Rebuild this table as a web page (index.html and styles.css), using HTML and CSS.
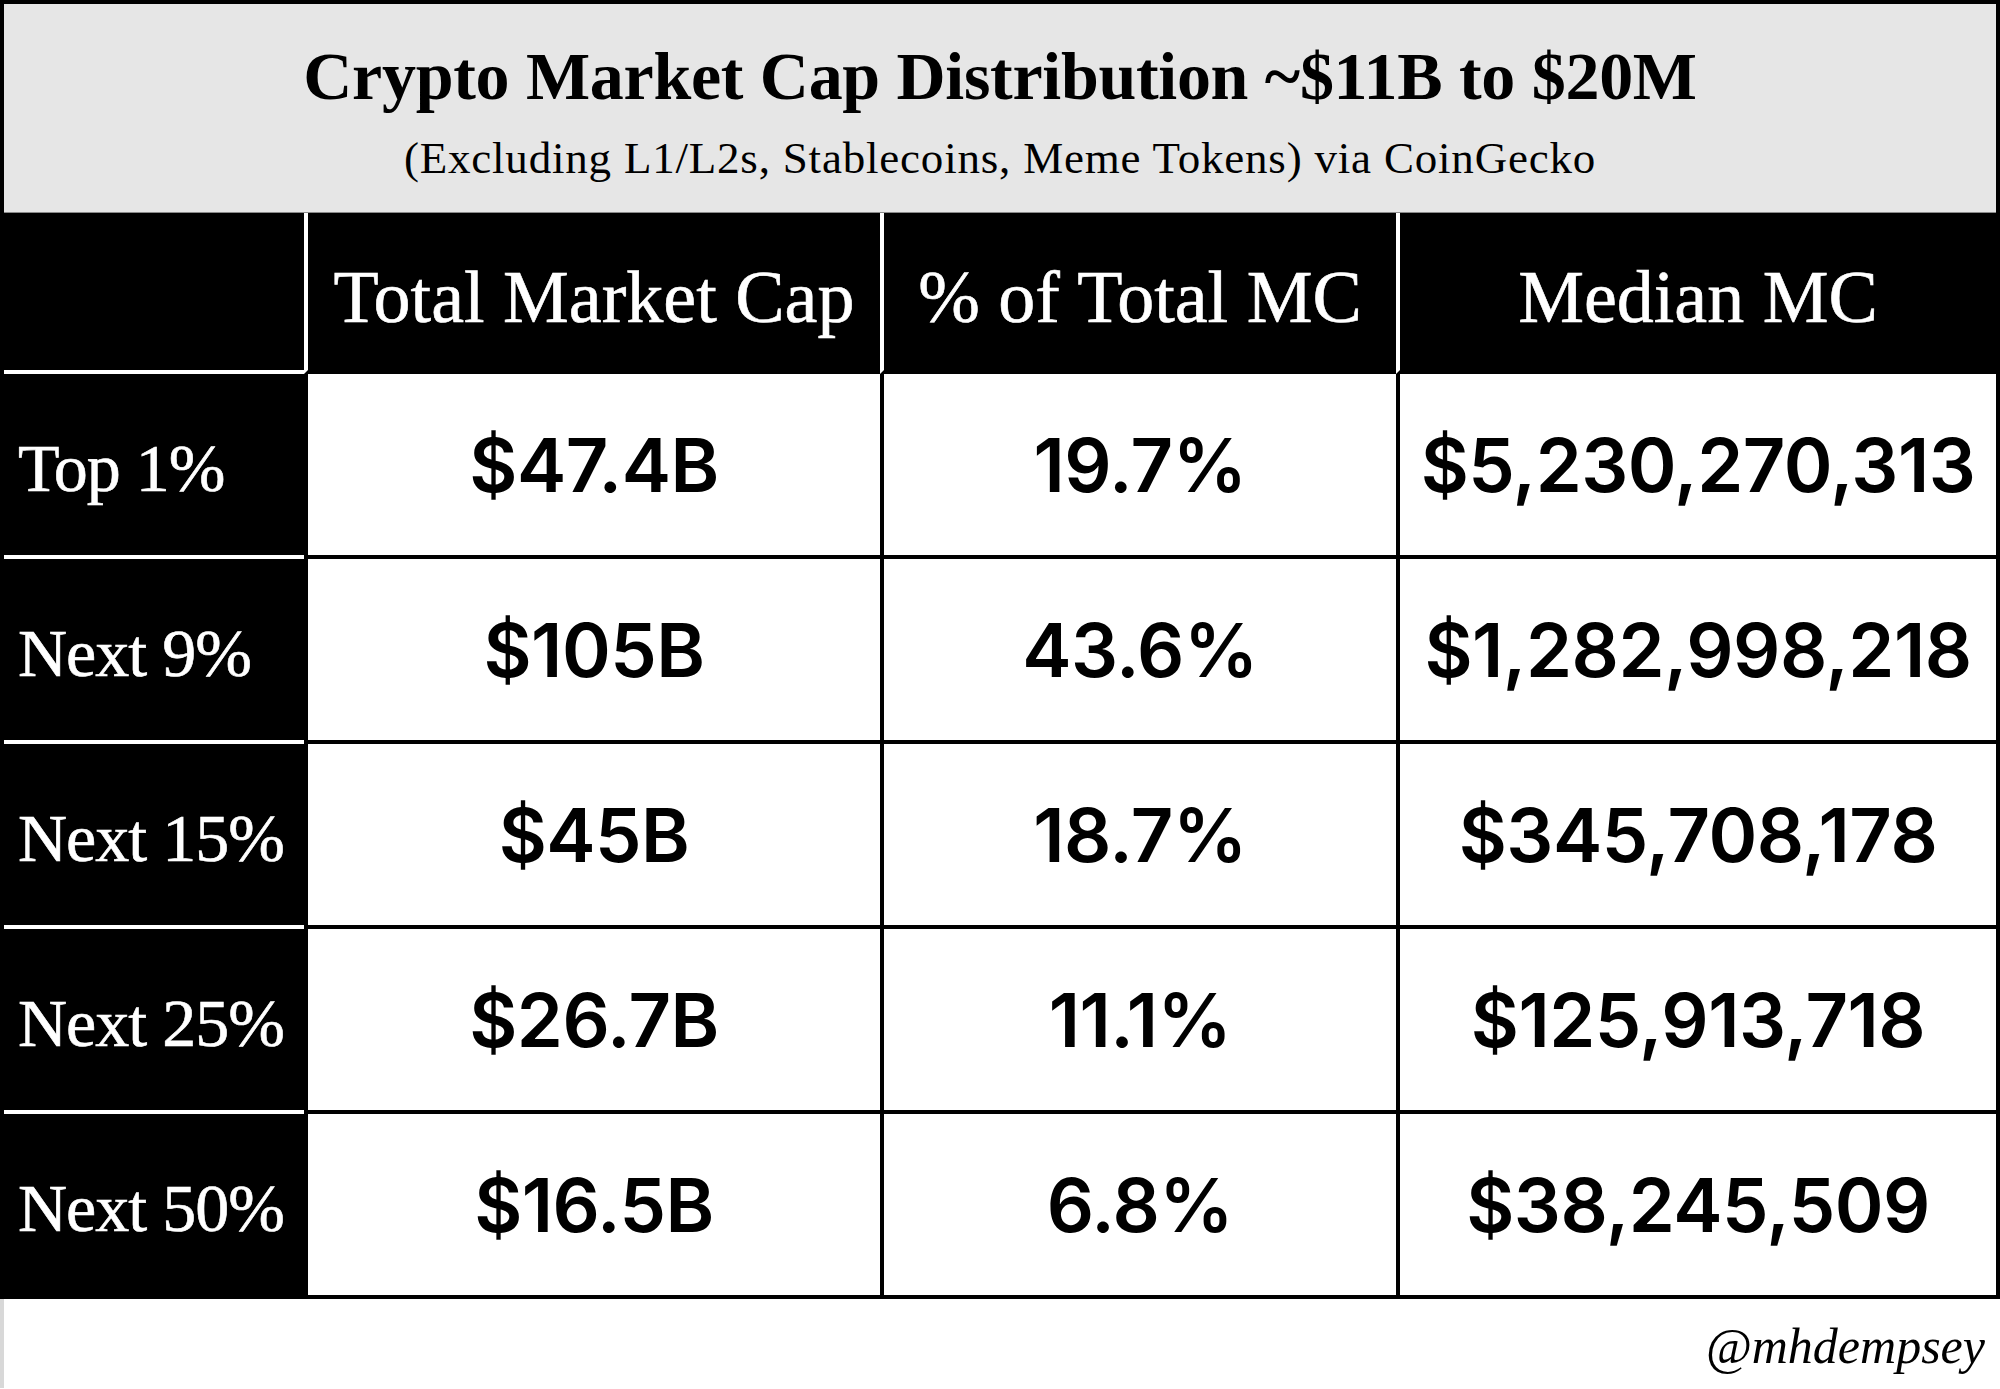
FILE: index.html
```html
<!DOCTYPE html>
<html lang="en">
<head>
<meta charset="utf-8">
<title>Crypto Market Cap Distribution</title>
<link rel="stylesheet" href="styles.css">
</head>
<body>
<div class="card">
  <div class="title-block">
    <div class="title">Crypto Market Cap Distribution ~$11B to $20M</div>
    <div class="subtitle">(Excluding L1/L2s, Stablecoins, Meme Tokens) via CoinGecko</div>
  </div>
  <div class="grid">
    <div class="hcell corner"></div>
    <div class="hcell">Total Market Cap</div>
    <div class="hcell">% of Total MC</div>
    <div class="hcell">Median MC</div>

    <div class="label">Top 1%</div>
    <div class="val">$47.4B</div>
    <div class="val">19.7%</div>
    <div class="val">$5,230,270,313</div>

    <div class="label">Next 9%</div>
    <div class="val">$105B</div>
    <div class="val">43.6%</div>
    <div class="val">$1,282,998,218</div>

    <div class="label">Next 15%</div>
    <div class="val">$45B</div>
    <div class="val">18.7%</div>
    <div class="val">$345,708,178</div>

    <div class="label">Next 25%</div>
    <div class="val">$26.7B</div>
    <div class="val">11.1%</div>
    <div class="val">$125,913,718</div>

    <div class="label last">Next 50%</div>
    <div class="val last">$16.5B</div>
    <div class="val last">6.8%</div>
    <div class="val last">$38,245,509</div>
  </div>
</div>
<div class="footer">@mhdempsey</div>
</body>
</html>
```
FILE: styles.css
```css
html, body {
  margin: 0;
  padding: 0;
  background: #ffffff;
}
body {
  width: 2000px;
  height: 1389px;
  overflow: hidden;
  font-family: "Liberation Serif", "DejaVu Serif", serif;
}
.card {
  border: 4px solid #000;
  box-sizing: border-box;
  width: 2000px;
}
.title-block {
  height: 209px;
  box-sizing: border-box;
  background: #e6e6e6;
  border-bottom: 1px solid #8a8a8a;
  text-align: center;
  color: #000;
  padding-top: 38px;
}
.title {
  font-size: 68px;
  line-height: 68px;
  font-weight: bold;
  letter-spacing: -0.3px;
}
.subtitle {
  margin-top: 26px;
  font-size: 45px;
  line-height: 45px;
  letter-spacing: 0.8px;
}
.grid {
  display: grid;
  grid-template-columns: 300px 576px 516px 600px;
  grid-template-rows: 161px 185px 185px 185px 185px 181px;
}
.hcell {
  background: #000;
  color: #fff;
  font-size: 74px;
  line-height: 74px;
  display: flex;
  align-items: center;
  justify-content: center;
  padding-top: 10px;
  box-sizing: border-box;
  border-left: 4px solid #fff;
  border-bottom: 4px solid #000;
  white-space: nowrap;
  -webkit-text-stroke: 0.6px #fff;
}
.hcell.corner {
  border-left: none;
  border-bottom: 4px solid #fff;
}
.label {
  background: #000;
  color: #fff;
  font-size: 68px;
  line-height: 68px;
  display: flex;
  align-items: center;
  padding-left: 14px;
  padding-top: 6px;
  box-sizing: border-box;
  border-bottom: 4px solid #fff;
  white-space: nowrap;
  letter-spacing: -1px;
  -webkit-text-stroke: 0.6px #fff;
}
.val {
  background: #fff;
  color: #000;
  font-family: "Inter", "Liberation Sans", sans-serif;
  font-weight: 600;
  font-size: 74px;
  line-height: 74px;
  letter-spacing: -0.5px;
  display: flex;
  align-items: center;
  justify-content: center;
  box-sizing: border-box;
  border-left: 4px solid #000;
  border-bottom: 4px solid #000;
  white-space: nowrap;
}
.label.last, .val.last {
  border-bottom: none;
}
.footer {
  box-sizing: border-box;
  height: 89px;
  border-left: 4px solid #d8d8d8;
  text-align: right;
  padding-top: 22px;
  padding-right: 15px;
  font-style: italic;
  font-size: 50px;
  line-height: 50px;
  color: #000;
}
```
